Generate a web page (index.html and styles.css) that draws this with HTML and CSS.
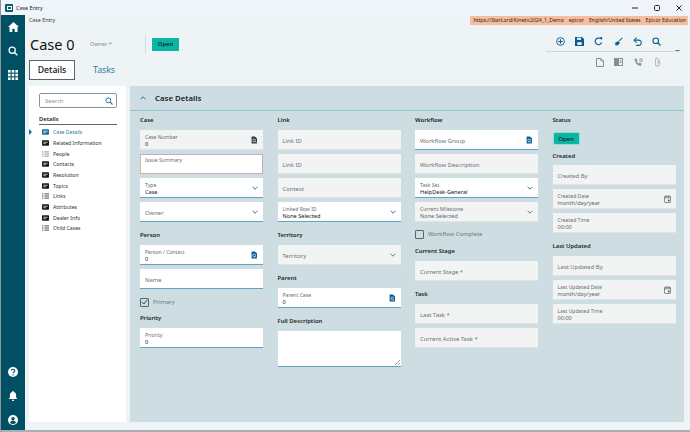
FILE: index.html
```html
<!DOCTYPE html>
<html lang="en">
<head>
<meta charset="utf-8">
<title>Case Entry</title>
<link rel="stylesheet" href="styles.css">
</head>
<body>
<svg class="defs" width="0" height="0" aria-hidden="true">
  <symbol id="i-doc" viewBox="0 0 10 12"><path d="M1 0h5.500L10 3.500V12H1z" fill="currentColor"/><circle cx="5.300" cy="6.800" r="2.300" fill="none" stroke="#fff" stroke-width="1.100"/><path d="M7 8.500l1.600 1.800" stroke="#fff" stroke-width="1.100"/></symbol>
  <symbol id="i-chev" viewBox="0 0 10 6"><path d="M1 1l4 4 4-4" fill="none" stroke="currentColor" stroke-width="1.600"/></symbol>
  <symbol id="i-card" viewBox="0 0 10 8"><rect width="10" height="8" rx="1" fill="currentColor"/><path d="M2 3h6M2 5h3.500" stroke="#fff" stroke-width="1"/></symbol>
  <symbol id="i-list" viewBox="0 0 10 8"><path d="M0 1h2M3.500 1H10M0 4h2M3.500 4H10M0 7h2M3.500 7H10" stroke="currentColor" stroke-width="1.100" fill="none"/></symbol>
  <symbol id="i-cal" viewBox="0 0 10 11"><rect x=".6" y="1.600" width="8.800" height="8.800" rx="1" fill="none" stroke="currentColor"/><path d="M.6 3.800h8.800M3 .3v2M7 .3v2" stroke="currentColor"/><rect x="5.600" y="6.400" width="2.400" height="2.400" fill="currentColor"/></symbol>
  <symbol id="i-search" viewBox="0 0 12 12"><circle cx="5" cy="5" r="3.700" fill="none" stroke="currentColor" stroke-width="1.500"/><path d="M7.800 7.800l3.400 3.400" stroke="currentColor" stroke-width="1.800"/></symbol>
</svg>

<div class="titlebar">
  <span class="app-icon"><span></span></span>
  <span class="app-name">Case Entry</span>
  <div class="win-controls">
    <svg width="8" height="8" viewBox="0 0 8 8"><path d="M1 4h6" stroke="#222"/></svg>
    <svg width="8" height="8" viewBox="0 0 8 8"><rect x="1.500" y="1.500" width="5" height="5" rx="1" fill="none" stroke="#222"/></svg>
    <svg width="8" height="8" viewBox="0 0 8 8"><path d="M1.500 1.500l5 5M6.500 1.500l-5 5" stroke="#222"/></svg>
  </div>
</div>

<div class="shell">
  <nav class="rail">
    <div class="rail-group">
      <svg width="11" height="10" viewBox="0 0 11 10"><path d="M5.500 0L11 5H9.500v5H6.700V6.800H4.300V10H1.500V5H0z" fill="#fff"/></svg>
      <svg class="rail-search" width="10" height="10"><use href="#i-search"/></svg>
      <svg width="10" height="10" viewBox="0 0 10 10" fill="#fff"><rect width="2.600" height="2.600"/><rect x="3.700" width="2.600" height="2.600"/><rect x="7.400" width="2.600" height="2.600"/><rect y="3.700" width="2.600" height="2.600"/><rect x="3.700" y="3.700" width="2.600" height="2.600"/><rect x="7.400" y="3.700" width="2.600" height="2.600"/><rect y="7.400" width="2.600" height="2.600"/><rect x="3.700" y="7.400" width="2.600" height="2.600"/><rect x="7.400" y="7.400" width="2.600" height="2.600"/></svg>
    </div>
    <div class="rail-group">
      <svg width="10" height="10" viewBox="0 0 10 10"><circle cx="5" cy="5" r="5" fill="#fff"/><path d="M3.400 3.800c0-2.100 3.300-2.100 3.300 0 0 1.300-1.600 1.200-1.600 2.500" fill="none" stroke="#004f63" stroke-width="1.100"/><circle cx="5.100" cy="7.900" r=".7" fill="#004f63"/></svg>
      <svg width="10" height="10" viewBox="0 0 10 10"><path d="M5 0c.6 0 .9.400.9.900 1.500.4 2.200 1.500 2.200 3v2.400L9.200 8H.8l1.100-1.700V3.900c0-1.500.7-2.600 2.200-3C4.100.4 4.400 0 5 0zM3.800 8.700h2.400C6.100 9.500 5.600 10 5 10s-1.100-.5-1.200-1.300z" fill="#fff"/></svg>
      <svg width="10" height="10" viewBox="0 0 10 10"><circle cx="5" cy="5" r="5" fill="#fff"/><circle cx="5" cy="3.700" r="1.700" fill="#004f63"/><path d="M1.900 7.800c.6-1.500 1.800-2 3.100-2s2.500.5 3.100 2C7.300 8.600 6.200 9 5 9s-2.300-.4-3.100-1.200z" fill="#004f63"/></svg>
    </div>
  </nav>

  <main class="main">
    <div class="crumb-row">
      <span class="crumb">Case Entry</span>
      <div class="env">
        <span>https://StarLord/Kinetic2024_1_Demo</span>
        <span>epicor</span>
        <span>English/United States</span>
        <span>Epicor Education</span>
      </div>
    </div>

    <header class="head">
      <div class="head-left">
        <div class="title-row">
          <h1 class="title">Case 0</h1>
          <span class="owner">Owner *</span>
          <span class="divider"></span>
          <span class="tag tag-square">Open</span>
        </div>
        <div class="tabs">
          <span class="tab tab-active">Details</span>
          <span class="tab">Tasks</span>
        </div>
      </div>
      <div class="tools">
        <div class="tool-row tool-primary">
          <svg width="9" height="9" viewBox="0 0 10 10"><circle cx="5" cy="5" r="4.300" fill="none" stroke="currentColor"/><path d="M5 2.500v5M2.500 5h5" stroke="currentColor" stroke-width="1.200"/></svg>
          <svg width="9" height="9" viewBox="0 0 10 10"><path d="M0 0h7.800L10 2.200V10H0z" fill="currentColor"/><rect x="2.200" y=".8" width="4.600" height="2.400" fill="#eef3f6"/><rect x="2.500" y="5.800" width="5" height="3" fill="#eef3f6"/></svg>
          <svg width="9" height="9" viewBox="0 0 10 10"><path d="M8.500 6.200A3.700 3.700 0 1 1 7.400 2" fill="none" stroke="currentColor" stroke-width="1.300"/><path d="M6.200 0l3 .3-.4 3.200z" fill="currentColor"/></svg>
          <svg width="9" height="9" viewBox="0 0 10 10"><path d="M5.500 4L9 .5l.7.7-3.400 3.600zM.3 6.500C2 6.500 3.500 5.200 4.500 4.400L6.500 6C5.800 8 4 9.700 2.500 9.800L3 8.300 1.500 9.200.8 8.600 2 7.600z" fill="currentColor"/></svg>
          <svg width="9" height="9" viewBox="0 0 10 10"><path d="M2.300 3.500h4a2.900 2.900 0 1 1 0 5.800H3.500" fill="none" stroke="currentColor" stroke-width="1.200"/><path d="M4 .8L1.200 3.500 4 6.200" fill="none" stroke="currentColor" stroke-width="1.200"/></svg>
          <svg width="9" height="9"><use href="#i-search"/></svg>
        </div>
        <div class="tool-line"><span class="dots">•••</span></div>
        <div class="tool-row tool-muted">
          <svg width="8" height="9" viewBox="0 0 8 9"><path d="M.5.500h4.500L7.500 3v5.500h-7z" fill="none" stroke="currentColor"/><path d="M5 .5V3h2.500" fill="none" stroke="currentColor"/></svg>
          <svg width="9" height="8" viewBox="0 0 9 8"><rect width="9" height="8" fill="currentColor"/><rect x="5" y="1" width="3" height="6" fill="#eef3f6"/><path d="M5.800 2.800h1.500M5.800 4.500h1.500" stroke="#777"/></svg>
          <svg width="9" height="9" viewBox="0 0 10 10"><path d="M1 .8l1.800-.3 1 2.300-1 .9c.5 1.300 1.200 2 2.500 2.500l.9-1 2.300 1-.3 1.800c-.1.500-.6.800-1.200.7C3.700 8.300 1.400 5.900.7 2 .6 1.500.7 1 1 .8z" fill="currentColor"/><path d="M6 .5h1.500V2H6zM8 .5h1.500V2H8zM6 2.700h1.500v1.500H6zM8 2.700h1.500v1.500H8z" fill="currentColor"/></svg>
          <svg width="7" height="10" viewBox="0 0 7 10"><path d="M5.500 3v4a2 2 0 0 1-4 0V2.500a1.300 1.300 0 0 1 2.700 0V6.800" fill="none" stroke="#bbb" stroke-width="1.100"/></svg>
        </div>
      </div>
    </header>

    <div class="content">
      <aside class="side">
        <div class="search">
          <span>Search</span>
          <svg width="8" height="8"><use href="#i-search"/></svg>
        </div>
        <div class="side-title">Details</div>
        <ul class="side-list">
          <li class="side-item side-current"><svg width="7" height="6"><use href="#i-card"/></svg>Case Details</li>
          <li class="side-item"><svg width="7" height="6"><use href="#i-card"/></svg>Related Information</li>
          <li class="side-item side-soft"><svg width="7" height="6"><use href="#i-list"/></svg>People</li>
          <li class="side-item"><svg width="7" height="6"><use href="#i-card"/></svg>Contacts</li>
          <li class="side-item"><svg width="7" height="6"><use href="#i-card"/></svg>Resolution</li>
          <li class="side-item"><svg width="7" height="6"><use href="#i-card"/></svg>Topics</li>
          <li class="side-item"><svg width="7" height="6"><use href="#i-list"/></svg>Links</li>
          <li class="side-item"><svg width="7" height="6"><use href="#i-card"/></svg>Attributes</li>
          <li class="side-item"><svg width="7" height="6"><use href="#i-card"/></svg>Dealer Info</li>
          <li class="side-item"><svg width="7" height="6"><use href="#i-list"/></svg>Child Cases</li>
        </ul>
      </aside>

      <section class="panel">
        <div class="panel-head">
          <svg class="panel-chev" width="6" height="4"><use href="#i-chev"/></svg>
          <h2>Case Details</h2>
        </div>
        <div class="cols">
          <div class="col">
            <h3>Case</h3>
            <div class="field ro"><label>Case Number</label><b>0</b><svg class="f-ico dark" width="6" height="8"><use href="#i-doc"/></svg></div>
            <div class="field issue"><label>Issue Summary</label></div>
            <div class="field ed"><label>Type</label><b>Case</b><svg class="f-chev" width="6" height="4"><use href="#i-chev"/></svg></div>
            <div class="field ed"><em>Owner</em><svg class="f-chev" width="6" height="4"><use href="#i-chev"/></svg></div>
            <h3>Person</h3>
            <div class="field ed"><label>Person / Contact</label><b>0</b><svg class="f-ico" width="6" height="8"><use href="#i-doc"/></svg></div>
            <div class="field ed"><em>Name</em></div>
            <div class="check"><span class="box"><svg width="7" height="6" viewBox="0 0 7 6"><path d="M.8 3l2 2L6.300.8" fill="none" stroke="#38474f" stroke-width="1"/></svg></span>Primary</div>
            <h3>Priority</h3>
            <div class="field ed"><label>Priority</label><b>0</b></div>
          </div>

          <div class="col">
            <h3>Link</h3>
            <div class="field ro"><em>Link ID</em></div>
            <div class="field ro"><em>Link ID</em></div>
            <div class="field ro"><em>Context</em></div>
            <div class="field ed"><label>Linked Row ID</label><b>None Selected</b><svg class="f-chev" width="6" height="4"><use href="#i-chev"/></svg></div>
            <h3>Territory</h3>
            <div class="field ro"><em>Territory</em><svg class="f-chev grey" width="6" height="4"><use href="#i-chev"/></svg></div>
            <h3>Parent</h3>
            <div class="field ed"><label>Parent Case</label><b>0</b><svg class="f-ico" width="6" height="8"><use href="#i-doc"/></svg></div>
            <h3>Full Description</h3>
            <div class="field ed area"><svg class="grip" width="5" height="5" viewBox="0 0 5 5"><path d="M5 0L0 5M5 3L3 5" stroke="#777" stroke-width=".7"/></svg></div>
          </div>

          <div class="col">
            <h3>Workflow</h3>
            <div class="field ed"><em>Workflow Group</em><svg class="f-ico" width="6" height="8"><use href="#i-doc"/></svg></div>
            <div class="field ro"><em>Workflow Description</em></div>
            <div class="field ed"><label>Task Set</label><b>HelpDesk-General</b><svg class="f-chev" width="6" height="4"><use href="#i-chev"/></svg></div>
            <div class="field ro"><label>Current Milestone</label><b class="soft">None Selected</b><svg class="f-chev grey" width="6" height="4"><use href="#i-chev"/></svg></div>
            <div class="check check-flow"><span class="box"></span>Workflow Complete</div>
            <h3>Current Stage</h3>
            <div class="field ro"><em>Current Stage *</em></div>
            <h3>Task</h3>
            <div class="field ro"><em>Last Task *</em></div>
            <div class="field ro"><em>Current Active Task *</em></div>
          </div>

          <div class="col">
            <h3>Status</h3>
            <span class="tag tag-round">Open</span>
            <h3 class="h-created">Created</h3>
            <div class="field ro"><em>Created By</em></div>
            <div class="field ro"><label>Created Date</label><b class="soft">month/day/year</b><svg class="f-ico grey" width="7" height="8"><use href="#i-cal"/></svg></div>
            <div class="field ro"><label>Created Time</label><b class="soft">00:00</b></div>
            <h3>Last Updated</h3>
            <div class="field ro"><em>Last Updated By</em></div>
            <div class="field ro"><label>Last Updated Date</label><b class="soft">month/day/year</b><svg class="f-ico grey" width="7" height="8"><use href="#i-cal"/></svg></div>
            <div class="field ro"><label>Last Updated Time</label><b class="soft">00:00</b></div>
          </div>
        </div>
      </section>
    </div>
  </main>
</div>
</body>
</html>
```

FILE: styles.css
```css
* { box-sizing: border-box; }
html, body { margin: 0; height: 100%; overflow: hidden; }
body {
  width: 690px;
  height: 432px;
  display: flex;
  flex-direction: column;
  background: #eef3f6;
  font-family: "Noto Sans", "Open Sans", sans-serif;
  color: #1c2226;
  border-left: 1px solid #8a9499;
  border-bottom: 2px solid #a9b0b4;
}
.defs { position: absolute; }
h1, h2, h3, ul { margin: 0; padding: 0; list-style: none; }

.titlebar {
  flex: 0 0 15px;
  display: flex;
  align-items: center;
  background: #f0f5fb;
  padding-left: 4px;
  padding-top: 1px;
}
.app-icon {
  width: 8px; height: 8px;
  background: #0e5a70;
  border-radius: 1px;
  display: flex; align-items: center; justify-content: center;
  margin-right: 3px;
}
.app-icon span { width: 5px; height: 4px; border: 1px solid #fff; }
.app-name { font-size: 5.400px; color: #1d2327; }
.win-controls {
  margin-left: auto;
  display: flex;
  gap: 14px;
  margin-right: 7px;
}

.shell { flex: 1; display: flex; min-height: 0; }
.rail {
  flex: 0 0 24px;
  background: #004f63;
  display: flex;
  flex-direction: column;
  justify-content: space-between;
  align-items: center;
  padding: 7px 0 5px;
}
.rail-group { display: flex; flex-direction: column; align-items: center; gap: 14px; }
.rail-group svg { display: block; }
.rail-search { color: #fff; }

.main { flex: 1; min-width: 0; display: flex; flex-direction: column; padding: 0 2px 0 4px; }
.crumb-row { height: 10px; display: flex; align-items: center; justify-content: space-between; }
.crumb { font-size: 5.300px; color: #3b4347; }
.env {
  display: flex;
  gap: 5px;
  background: #f8bc9f;
  height: 9px;
  align-items: center;
  padding: 0 2px 0 3px;
  font-size: 5.150px;
  color: #2b2724;
  white-space: nowrap;
}

.head { height: 61px; display: flex; justify-content: space-between; }
.head-left { display: flex; flex-direction: column; }
.title-row { height: 35px; display: flex; align-items: center; padding-top: 3px; }
.title { font-size: 14.500px; font-weight: 400; color: #111; width: 60px; margin-left: 1px; line-height: 1; }
.owner { font-size: 5.500px; color: #80878b; width: 55px; }
.divider { width: 1px; height: 19px; background: #d5dbde; margin-right: 6px; }
.tag { display: flex; align-items: center; justify-content: center; width: 27px; height: 13px; background: #0bb5a4; font-size: 6px; font-weight: 500; color: #06201e; }
.tag-round { border-radius: 2px; border: 1px solid #9adcd4; margin-top: 2px; }
.tabs { display: flex; align-items: center; }
.tab { font-size: 8.700px; color: #2a7fa3; height: 20px; display: flex; align-items: center; }
.tab:last-child { margin-left: 18px; }
.tab-active { width: 46px; justify-content: center; color: #111; background: #fff; border: 1px solid #55626a; font-weight: 500; }

.tools { display: flex; flex-direction: column; width: 145px; padding-top: 11px; align-items: flex-end; }
.tool-row { display: flex; align-items: center; justify-content: flex-end; }
.tool-primary { color: #0a5a93; gap: 10.200px; padding-right: 27px; height: 10px; }
.tool-muted { color: #878f93; gap: 10.800px; height: 10px; padding-right: 27px; margin-top: 5px; }
.tool-line { position: relative; width: 127px; margin-top: 5px; height: 1px; background: #d0d5d8; margin-right: 15px; }
.dots { position: absolute; left: 129px; top: -3px; font-size: 5px; line-height: 7px; color: #0a4f6b; letter-spacing: -.5px; white-space: nowrap; }

.content { flex: 1; display: flex; min-height: 0; padding-bottom: 8px; gap: 4px; }
.side { flex: 0 0 97px; background: #fff; padding: 7px 9px 0 10px; }
.search {
  height: 15px;
  border: 1px solid #8c9499;
  border-radius: 2px;
  display: flex;
  align-items: center;
  justify-content: space-between;
  padding: 0 3px 0 5px;
  font-size: 5.800px;
  color: #8b9195;
}
.search svg { color: #2876ab; }
.side-title {
  margin-top: 7px;
  height: 10px;
  line-height: 9px;
  font-size: 5.800px;
  font-weight: 600;
  border-bottom: 1px solid #5e676c;
}
.side-list { margin-top: 2px; margin-left: 3px; }
.side-item {
  position: relative;
  height: 10.670px;
  display: flex;
  align-items: center;
  gap: 4px;
  font-size: 5.150px;
  color: #2b3337;
  white-space: nowrap;
}
.side-item svg { color: #15191c; flex: none; }
.side-soft svg { color: #6d7478; }
.side-current { color: #2f7ba0; }
.side-current svg { color: #1d6fa5; }
.side-current::before {
  content: "";
  position: absolute;
  left: -13px;
  border-left: 3px solid #0f6db0;
  border-top: 3px solid transparent;
  border-bottom: 3px solid transparent;
}

.panel { flex: 0 0 554px; background: #cddde2; display: flex; flex-direction: column; }
.panel-head {
  height: 25px;
  flex: none;
  display: flex;
  align-items: center;
  border-bottom: 1px solid #8dc6cc;
  padding-left: 10px;
  color: #1f6f94;
}
.panel-chev { transform: rotate(180deg); margin-right: 9px; }
.panel-head h2 { font-size: 7.800px; font-weight: 600; color: #17202a; }
.cols { display: flex; gap: 14.500px; padding: 2px 0 0 10px; }
.col { flex: 0 0 123px; display: flex; flex-direction: column; align-items: flex-start; }
.col h3 { height: 14px; line-height: 14px; font-size: 5.900px; font-weight: 600; color: #1d2326; margin: 2px 0 3px; }
.col h3:first-child { margin-top: 0; }
.col h3.h-created { margin: 4px 0 2px; }

.field {
  position: relative;
  width: 123px;
  height: 20px;
  margin-bottom: 4px;
  padding: 2px 5px 0;
  display: flex;
  flex-direction: column;
  justify-content: center;
  flex: none;
}
.field label { font-size: 5.100px; line-height: 7px; color: #666d71; }
.field b { font-size: 5.600px; line-height: 7px; font-weight: 400; color: #15191c; }
.field b.soft { color: #5f666a; }
.field em { font-style: normal; font-size: 5.900px; color: #6b7276; }
.ro { background: #f2f3f3; border-bottom: 1px solid #dfe4e6; }
.ed { background: #fff; border-bottom: 1px solid #5da4c7; }
.issue { background: #fff; border: 1px solid #c9a9ba; border-left-color: #d8b8a6; justify-content: flex-start; padding-top: 2px; padding-left: 4px; }
.f-chev { position: absolute; right: 5px; top: 8px; color: #1f6f9e; }
.f-chev.grey { color: #70777b; }
.f-ico { position: absolute; right: 6px; top: 6px; color: #0d5a94; }
.f-ico.dark { color: #2e3a40; }
.f-ico.grey { color: #50595e; right: 5px; }
.area { height: 36px; }
.grip { position: absolute; right: 1px; bottom: 1px; }

.check { height: 10px; display: flex; align-items: center; gap: 4px; font-size: 5.900px; color: #6f777b; margin-top: 4px; margin-bottom: 2px; }
.check-flow { margin-top: 3px; margin-bottom: 3px; }
.box { width: 9px; height: 9px; border: 1px solid #59656b; display: flex; align-items: center; justify-content: center; border-radius: 1px; }
```
